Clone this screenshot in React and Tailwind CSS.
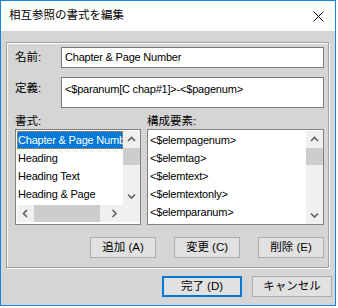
import React from "react";

const FONT = { fontFamily: '"Liberation Sans", "Noto Sans CJK JP", sans-serif' };

function Chevron({ dir }) {
  const pts = {
    up: "1,5 4.5,1.5 8,5",
    down: "1,1.5 4.5,5 8,1.5",
    left: "5,1 1.5,4.5 5,8",
    right: "1.5,1 5,4.5 1.5,8",
  }[dir];
  const vertical = dir === "up" || dir === "down";
  return (
    <svg
      width={vertical ? 9 : 7}
      height={vertical ? 7 : 9}
      viewBox={vertical ? "0 0 9 7" : "0 0 7 9"}
    >
      <polyline points={pts} fill="none" stroke="#606060" strokeWidth="1.6" />
    </svg>
  );
}

function VScroll() {
  return (
    <div className="flex w-[17px] shrink-0 flex-col bg-[#f0f0f0]">
      <div className="flex h-[17px] items-center justify-center">
        <Chevron dir="up" />
      </div>
      <div className="h-[17px] bg-[#cdcdcd]" />
      <div className="flex-1" />
      <div className="flex h-[17px] items-center justify-center">
        <Chevron dir="down" />
      </div>
    </div>
  );
}

function Button({ children, primary, className = "" }) {
  return (
    <div
      className={`flex h-[21px] items-center justify-center bg-[#e1e1e1] text-[11.5px] text-black ${
        primary ? "border-2 border-[#0078d7]" : "border border-[#adadad]"
      } ${className}`}
    >
      {children}
    </div>
  );
}

const latin = "text-[11px] tracking-[-0.2px]";

const styles = ["Chapter & Page Number", "Heading", "Heading Text", "Heading & Page"];
const elements = [
  "<$elempagenum>",
  "<$elemtag>",
  "<$elemtext>",
  "<$elemtextonly>",
  "<$elemparanum>",
];

export default function App() {
  return (
    <div className="h-[308px] w-[338px] bg-white" style={FONT}>
      <div className="flex h-[306px] w-[336px] flex-col border border-[#1883d7] bg-[#d5d5d5]">
        {/* title bar */}
        <div className="flex h-[30px] shrink-0 items-center bg-white pl-[8px] pr-[8px]">
          <span className="text-[11.5px] text-black">相互参照の書式を編集</span>
          <svg className="ml-auto mr-[3px]" width="11" height="11" viewBox="0 0 11 11">
            <path d="M0.5 0.5 L10.5 10.5 M10.5 0.5 L0.5 10.5" stroke="#000" strokeWidth="1" />
          </svg>
        </div>

        <div className="flex flex-1 flex-col px-[5px] pt-[11px]">
          {/* group box */}
          <div className="flex h-[226px] w-[323px] flex-col border border-[#a0a0a0] pl-[8px] pr-[4px] pt-[4px] shadow-[1px_1px_0_#ffffff,inset_1px_1px_0_#ffffff]">
            <div className="flex h-[21px] items-center">
              <span className="w-[46px] text-[11.5px] text-black">名前:</span>
              <div className={`flex h-[21px] w-[263px] items-center border border-[#7a7a7a] bg-white pl-[3px] text-black ${latin}`}>
                Chapter &amp; Page Number
              </div>
            </div>

            <div className="mt-[9px] flex">
              <span className="mt-[3px] w-[46px] text-[11.5px] leading-[16px] text-black">定義:</span>
              <div className={`h-[31px] w-[263px] border border-[#7a7a7a] bg-white pl-[3px] pt-[3px] leading-[16px] text-black ${latin}`}>
                {"<$paranum[C chap#1]>-<$pagenum>"}
              </div>
            </div>

            <div className="mt-[5px] flex h-[16px] text-[11.5px] leading-[16px] text-black">
              <span className="w-[132px]">書式:</span>
              <span>構成要素:</span>
            </div>

            <div className="flex gap-[6px]">
              {/* styles list */}
              <div className="flex h-[96px] w-[126px] flex-col border border-[#828282] bg-white pl-px pt-px">
                <div className="flex h-[74px]">
                  <div className="flex-1 overflow-hidden">
                    {styles.map((s, i) => (
                      <div
                        key={s}
                        className={`h-[18px] whitespace-nowrap leading-[16px] ${latin} ${
                          i === 0
                            ? "border border-dotted border-[#ff8728] bg-[#0078d7] text-white"
                            : "border border-transparent text-black"
                        }`}
                      >
                        {s}
                      </div>
                    ))}
                  </div>
                  <VScroll />
                </div>
                <div className="flex h-[17px]">
                  <div className="flex flex-1 bg-[#f0f0f0]">
                    <div className="flex w-[17px] items-center justify-center">
                      <Chevron dir="left" />
                    </div>
                    <div className="w-[66px] bg-[#cdcdcd]" />
                    <div className="flex-1" />
                    <div className="flex w-[17px] items-center justify-center">
                      <Chevron dir="right" />
                    </div>
                  </div>
                  <div className="w-[17px] bg-[#f0f0f0]" />
                </div>
              </div>

              {/* elements list */}
              <div className="flex h-[96px] w-[177px] border border-[#828282] bg-white pl-px pt-px">
                <div className="flex-1 overflow-hidden">
                  {elements.map((s) => (
                    <div
                      key={s}
                      className={`h-[18px] whitespace-nowrap border border-transparent leading-[16px] text-black ${latin}`}
                    >
                      {s}
                    </div>
                  ))}
                </div>
                <VScroll />
              </div>
            </div>

            <div className="mt-[12px] flex justify-end gap-[18px]">
              <Button className="w-[66px]">追加 (A)</Button>
              <Button className="w-[66px]">変更 (C)</Button>
              <Button className="w-[66px]">削除 (E)</Button>
            </div>
          </div>

          <div className="-mr-[2px] mt-[8px] flex justify-end gap-[10px]">
            <Button primary className="w-[80px]">完了 (D)</Button>
            <Button className="w-[80px]">キャンセル</Button>
          </div>
        </div>
      </div>
    </div>
  );
}
